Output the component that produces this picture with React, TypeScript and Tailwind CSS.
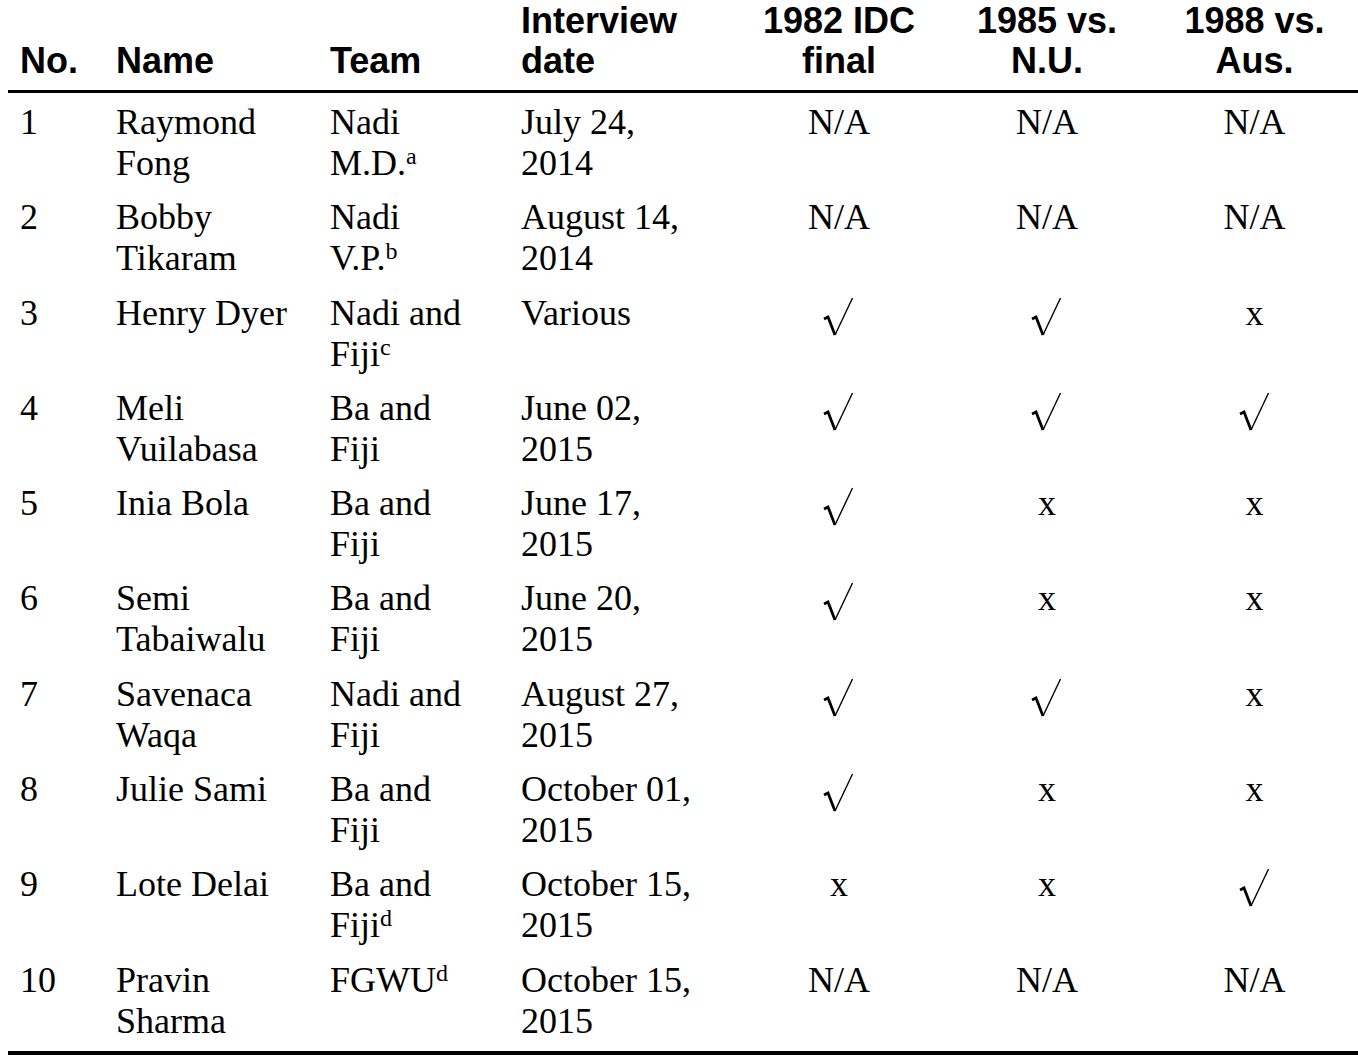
const rows = [
  { no: "1", name: ["Raymond", "Fong"], team: ["Nadi", "M.D."], sup: "a", date: ["July 24,", "2014"], c: ["N/A", "N/A", "N/A"] },
  { no: "2", name: ["Bobby", "Tikaram"], team: ["Nadi", "V.P."], sup: "b", date: ["August 14,", "2014"], c: ["N/A", "N/A", "N/A"] },
  { no: "3", name: ["Henry Dyer"], team: ["Nadi and", "Fiji"], sup: "c", date: ["Various"], c: ["v", "v", "x"] },
  { no: "4", name: ["Meli", "Vuilabasa"], team: ["Ba and", "Fiji"], date: ["June 02,", "2015"], c: ["v", "v", "v"] },
  { no: "5", name: ["Inia Bola"], team: ["Ba and", "Fiji"], date: ["June 17,", "2015"], c: ["v", "x", "x"] },
  { no: "6", name: ["Semi", "Tabaiwalu"], team: ["Ba and", "Fiji"], date: ["June 20,", "2015"], c: ["v", "x", "x"] },
  { no: "7", name: ["Savenaca", "Waqa"], team: ["Nadi and", "Fiji"], date: ["August 27,", "2015"], c: ["v", "v", "x"] },
  { no: "8", name: ["Julie Sami"], team: ["Ba and", "Fiji"], date: ["October 01,", "2015"], c: ["v", "x", "x"] },
  { no: "9", name: ["Lote Delai"], team: ["Ba and", "Fiji"], sup: "d", date: ["October 15,", "2015"], c: ["x", "x", "v"] },
  { no: "10", name: ["Pravin", "Sharma"], team: ["FGWU"], sup: "d", date: ["October 15,", "2015"], c: ["N/A", "N/A", "N/A"] },
];

const grid = "grid grid-cols-[96px_214px_191px_226px_208px_208px_1fr]";

function Lines({ lines, sup }: { lines: string[]; sup?: string }) {
  return (
    <div className="pl-3">
      {lines.map((l, i) => (
        <div key={i}>
          {l}
          {sup && i === lines.length - 1 && (
            <span className="relative top-[-11px] align-baseline text-[24px] leading-none">{sup}</span>
          )}
        </div>
      ))}
    </div>
  );
}

function Mark({ v }: { v: string }) {
  if (v === "v") {
    return (
      <svg width="32" height="40" viewBox="0 0 32 40" className="mx-auto mt-[4px]">
        <path d="M1 22 L5 20 L12 38" fill="none" stroke="#000" strokeWidth="2.8" strokeLinejoin="miter" />
        <path d="M12 38 L29.5 1" fill="none" stroke="#000" strokeWidth="1.4" />
      </svg>
    );
  }
  return <div className="text-center">{v}</div>;
}

export default function App() {
  return (
    <div className="min-h-[1055px] bg-white pl-2 text-black">
      <div className={`${grid} border-b-[3px] border-black pb-[9px] pt-px font-['Liberation_Sans',Arial,sans-serif] text-[36px] font-bold leading-[40px]`}>
        <div className="flex items-end pl-3">No.</div>
        <div className="flex items-end pl-3">Name</div>
        <div className="flex items-end pl-3">Team</div>
        <div className="pl-3">
          Interview
          <br />
          date
        </div>
        <div className="text-center">
          1982 IDC
          <br />
          final
        </div>
        <div className="text-center">
          1985 vs.
          <br />
          N.U.
        </div>
        <div className="text-center">
          1988 vs.
          <br />
          Aus.
        </div>
      </div>
      <div className="border-b-4 border-black pb-[5px] font-['Liberation_Serif','Times_New_Roman',serif] text-[36px] leading-[41px]">
        {rows.map((r) => (
          <div key={r.no} className={`${grid} h-[95.3px] pt-[9px]`}>
            <div className="pl-3">{r.no}</div>
            <Lines lines={r.name} />
            <Lines lines={r.team} sup={r.sup} />
            <Lines lines={r.date} />
            {r.c.map((v, i) => (
              <Mark key={i} v={v} />
            ))}
          </div>
        ))}
      </div>
    </div>
  );
}
